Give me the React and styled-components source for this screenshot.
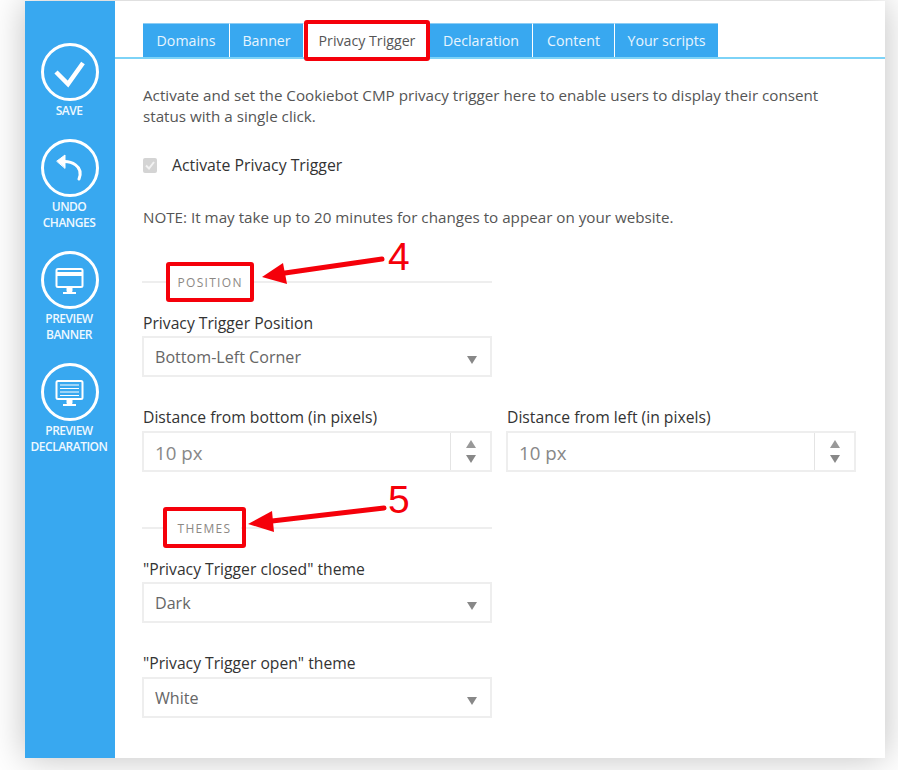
import React from "react";
import styled, { createGlobalStyle } from "styled-components";

const Global = createGlobalStyle`
  html, body { margin: 0; padding: 0; background: #fff; }
  body { font-family: "Open Sans", "Noto Sans", sans-serif; }
`;

const Page = styled.div`
  position: relative;
  width: 898px;
  height: 770px;
  overflow: hidden;
  padding: 1px 13px 12px 25px;
  box-sizing: border-box;
`;

const Panel = styled.div`
  display: flex;
  height: 757px;
  background: #fff;
  box-shadow: 0 0 34px rgba(0, 0, 0, 0.25);
`;

//sidebar
const Sidebar = styled.aside`
  width: 90px;
  flex-shrink: 0;
  background: #38a8f0;
  padding-top: 42px;
  box-sizing: border-box;
`;

const SideItem = styled.div`
  display: flex;
  flex-direction: column;
  align-items: center;
  margin-bottom: 17px;
`;

const Circle = styled.div`
  width: 58px;
  height: 58px;
  border: 3px solid #fff;
  border-radius: 50%;
  box-sizing: border-box;
  position: relative;
  svg {
    position: absolute;
    left: -3px;
    top: -3px;
  }
`;

const SideLabel = styled.div`
  margin-top: 2px;
  margin-bottom: 3px;
  margin-left: -2px;
  color: #eef8ff;
  font-size: 12px;
  font-weight: 600;
  line-height: 16px;
  text-align: center;
  letter-spacing: -0.5px;
  white-space: nowrap;
`;

//main
const Main = styled.main`
  flex: 1;
  min-width: 0;
`;

const TabBar = styled.nav`
  display: flex;
  height: 34px;
  margin-top: 22px;
  padding-left: 28px;
  border-bottom: 2px solid #7dd3f7;
`;

const Tab = styled.div`
  height: 34px;
  box-sizing: border-box;
  width: ${(p) => p.$width}px;
  display: flex;
  align-items: center;
  justify-content: center;
  font-size: 14.2px;
  color: ${(p) => (p.$active ? "#555" : "#e8f5fe")};
  background: ${(p) => (p.$active ? "#fff" : "#38a8f0")};
  border-top: 1px solid #8ccdf5;
  border-right: ${(p) => (p.$last || p.$active ? "none" : "1px solid #fff")};
`;

const Content = styled.div`
  padding-left: 27px;
  width: 714px;
`;

const Intro = styled.p`
  margin: 26px 0 0;
  padding-left: 1px;
  font-size: 15.2px;
  line-height: 21px;
  color: #555;
  white-space: nowrap;
`;

const CheckRow = styled.label`
  display: flex;
  align-items: center;
  margin-top: 28px;
  padding-left: 1px;
  font-size: 15.8px;
  line-height: 21px;
  color: #333;
`;

const CheckBox = styled.span`
  width: 14px;
  height: 15px;
  margin-right: 15px;
  border-radius: 2px;
  background: #d4d4d4;
  display: flex;
  align-items: center;
  justify-content: center;
`;

const Note = styled.p`
  margin: 31px 0 0;
  padding-left: 1px;
  font-size: 15.2px;
  line-height: 21px;
  color: #555;
`;

const SectionHead = styled.div`
  display: flex;
  align-items: center;
  width: 350px;
  height: 21px;
  margin-top: ${(p) => p.$top}px;
  margin-bottom: 21px;
  &::before,
  &::after {
    content: "";
    height: 2px;
    background: #eee;
  }
  &::before {
    width: 25px;
  }
  &::after {
    flex: 1;
  }
`;

const Legend = styled.span`
  padding: 2px 10px 0 10.5px;
  font-size: 12px;
  letter-spacing: 1.3px;
  color: #8c8884;
`;

const Field = styled.div`
  margin-top: ${(p) => p.$top || 0}px;
`;

const FieldLabel = styled.div`
  padding-left: 1px;
  font-size: 15.7px;
  line-height: 21px;
  color: #333;
  white-space: nowrap;
  margin-bottom: ${(p) => p.$gap || 2}px;
`;

const SelectBox = styled.div`
  width: 350px;
  height: 41px;
  box-sizing: border-box;
  border: 2px solid #eee;
  padding: 1px 13px 0 11px;
  display: flex;
  align-items: center;
  justify-content: space-between;
  font-size: 16.1px;
  color: #666;
  &::after {
    content: "";
    margin-top: 5px;
    border-left: 5px solid transparent;
    border-right: 5px solid transparent;
    border-top: 8px solid #888;
  }
`;

const Row = styled.div`
  display: grid;
  grid-template-columns: 350px 350px;
  column-gap: 14px;
  margin-top: 30px;
`;

const NumberBox = styled.div`
  height: 41px;
  box-sizing: border-box;
  border: 2px solid #eee;
  display: flex;
  font-size: 18.7px;
  color: #888;
`;

const NumberValue = styled.div`
  flex: 1;
  display: flex;
  align-items: center;
  padding: 1px 0 0 11px;
`;

const Spinner = styled.div`
  width: 39px;
  border-left: 1px solid #e4e4e4;
  display: flex;
  flex-direction: column;
  align-items: center;
  justify-content: center;
  gap: 7px;
`;

const Arrow = styled.span`
  border-left: 5px solid transparent;
  border-right: 5px solid transparent;
  ${(p) => (p.$up ? "border-bottom: 8px solid #999;" : "border-top: 8px solid #888;")}
`;

//annotations on top of the screenshot
const RedBox = styled.div`
  position: absolute;
  left: ${(p) => p.$x}px;
  top: ${(p) => p.$y}px;
  width: ${(p) => p.$w}px;
  height: ${(p) => p.$h}px;
  box-sizing: border-box;
  border: 4px solid #f5000a;
  border-radius: 3px;
`;

const RedNumber = styled.div`
  position: absolute;
  left: 388px;
  top: ${(p) => p.$y}px;
  font-family: "Liberation Sans", Arial, sans-serif;
  font-size: 39px;
  line-height: 44px;
  color: #f5000a;
`;

const ArrowLayer = styled.svg`
  position: absolute;
  left: 0;
  top: 0;
  pointer-events: none;
`;

const CheckIcon = () => (
  <svg width="58" height="58" viewBox="0 0 58 58" fill="none" stroke="#fff" strokeWidth="4.5">
    <path d="M15 29 L27 41 L42 20" />
  </svg>
);

const UndoIcon = () => (
  <svg width="58" height="58" viewBox="0 0 58 58" fill="none" stroke="#fff" strokeWidth="3" strokeLinecap="round">
    <path d="M19 23 C30 21 43 27 38 40" />
    <path d="M16 22 L24 16 L24 29 Z" fill="#fff" strokeWidth="1" strokeLinejoin="round" />
  </svg>
);

const Monitor = ({ children }) => (
  <svg width="58" height="58" viewBox="0 0 58 58" fill="none" stroke="#fff">
    <rect x="15.5" y="18" width="26" height="18" rx="1.5" strokeWidth="2" />
    <path d="M26 37 H31 V40.5 H26 Z" fill="#fff" strokeWidth="1" />
    <path d="M22 42 H35" strokeWidth="2" />
    {children}
  </svg>
);

const TABS = [
  { name: "Domains", width: 87 },
  { name: "Banner", width: 74 },
  { name: "Privacy Trigger", width: 126, active: true },
  { name: "Declaration", width: 103 },
  { name: "Content", width: 82 },
  { name: "Your scripts", width: 103, last: true },
];

const App = () => {
  return (
    <Page>
      <Global />
      <Panel>
        <Sidebar>
          <SideItem>
            <Circle><CheckIcon /></Circle>
            <SideLabel>SAVE</SideLabel>
          </SideItem>
          <SideItem>
            <Circle><UndoIcon /></Circle>
            <SideLabel>UNDO<br />CHANGES</SideLabel>
          </SideItem>
          <SideItem>
            <Circle>
              <Monitor>
                <rect x="16" y="21" width="25" height="4" fill="#fff" stroke="none" />
              </Monitor>
            </Circle>
            <SideLabel>PREVIEW<br />BANNER</SideLabel>
          </SideItem>
          <SideItem>
            <Circle>
              <Monitor>
                <path d="M19 22 H38 M19 25.5 H38 M19 29 H38 M19 32.5 H38" strokeWidth="1" />
              </Monitor>
            </Circle>
            <SideLabel>PREVIEW<br />DECLARATION</SideLabel>
          </SideItem>
        </Sidebar>

        <Main>
          <TabBar>
            {TABS.map((t) => (
              <Tab key={t.name} $width={t.width} $active={t.active} $last={t.last}>
                {t.name}
              </Tab>
            ))}
          </TabBar>

          <Content>
            <Intro>
              Activate and set the Cookiebot CMP privacy trigger here to enable users to display their consent
              <br />
              status with a single click.
            </Intro>
            <CheckRow>
              <CheckBox>
                <svg width="10" height="9" viewBox="0 0 10 9" fill="none" stroke="#f2f2f2" strokeWidth="2">
                  <path d="M1 4.5 L4 7.5 L9 1" />
                </svg>
              </CheckBox>
              Activate Privacy Trigger
            </CheckRow>
            <Note>NOTE: It may take up to 20 minutes for changes to appear on your website.</Note>

            <SectionHead $top={43}>
              <Legend>POSITION</Legend>
            </SectionHead>
            <Field>
              <FieldLabel>Privacy Trigger Position</FieldLabel>
              <SelectBox>Bottom-Left Corner</SelectBox>
            </Field>
            <Row>
              <Field>
                <FieldLabel $gap={3}>Distance from bottom (in pixels)</FieldLabel>
                <NumberBox>
                  <NumberValue>10 px</NumberValue>
                  <Spinner><Arrow $up /><Arrow /></Spinner>
                </NumberBox>
              </Field>
              <Field>
                <FieldLabel $gap={3}>Distance from left (in pixels)</FieldLabel>
                <NumberBox>
                  <NumberValue>10 px</NumberValue>
                  <Spinner><Arrow $up /><Arrow /></Spinner>
                </NumberBox>
              </Field>
            </Row>

            <SectionHead $top={45}>
              <Legend>THEMES</Legend>
            </SectionHead>
            <Field>
              <FieldLabel>"Privacy Trigger closed" theme</FieldLabel>
              <SelectBox>Dark</SelectBox>
            </Field>
            <Field $top={30}>
              <FieldLabel $gap={3}>"Privacy Trigger open" theme</FieldLabel>
              <SelectBox>White</SelectBox>
            </Field>
          </Content>
        </Main>
      </Panel>

      <RedBox $x={304} $y={20} $w={126} $h={41} />
      <RedBox $x={166} $y={262} $w={88} $h={40} />
      <RedBox $x={163} $y={507} $w={83} $h={41} />
      <ArrowLayer width="898" height="770" viewBox="0 0 898 770">
        <path d="M382 259 L285 273" stroke="#f5000a" strokeWidth="5" strokeLinecap="round" />
        <path d="M262 277 L283 263 L287 284 Z" fill="#f5000a" />
        <path d="M384 508 L272 521" stroke="#f5000a" strokeWidth="5" strokeLinecap="round" />
        <path d="M248 524 L272 511 L274 532 Z" fill="#f5000a" />
      </ArrowLayer>
      <RedNumber $y={235}>4</RedNumber>
      <RedNumber $y={478}>5</RedNumber>
    </Page>
  );
};

export default App;
